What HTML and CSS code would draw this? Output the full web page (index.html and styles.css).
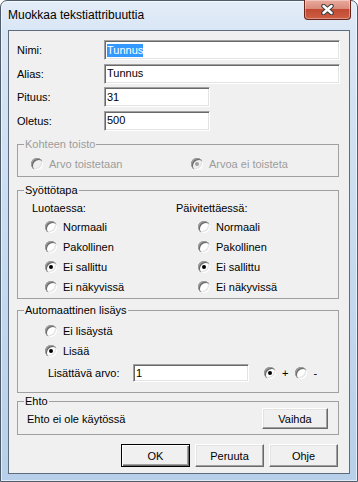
FILE: index.html
```html
<!DOCTYPE html>
<html lang="fi">
  <head>
    <meta charset="UTF-8" />
    <meta name="viewport" content="width=device-width, initial-scale=1.0" />
    <title>Muokkaa tekstiattribuuttia</title>
    <link rel="stylesheet" href="styles.css">
  </head>
  <body>
    <div class="window">
      <div class="titlebar">
        <span class="title">Muokkaa tekstiattribuuttia</span>
        <button class="close" title="Sulje">
          <svg width="13" height="11" viewBox="0 0 13 11">
            <path d="M2.5 2 L10.5 9 M10.5 2 L2.5 9" stroke="#3c3c3c" stroke-width="4.5" stroke-linecap="round" />
            <path d="M2.5 2 L10.5 9 M10.5 2 L2.5 9" stroke="#fff" stroke-width="2.5" stroke-linecap="round" />
          </svg>
        </button>
      </div>

      <div class="client">
        <div class="props">
          <span>Nimi:</span>
          <div class="field wide"><span class="selected">Tunnus</span></div>
          <span>Alias:</span>
          <div class="field wide">Tunnus</div>
          <span>Pituus:</span>
          <div class="field short">31</div>
          <span>Oletus:</span>
          <div class="field short">500</div>
        </div>

        <fieldset class="group repeat">
          <legend class="muted">Kohteen toisto</legend>
          <div class="repeat-row">
            <label class="radio disabled"><span class="dot"></span>Arvo toistetaan</label>
            <label class="radio disabled"><span class="dot checked"></span>Arvoa ei toisteta</label>
          </div>
        </fieldset>

        <fieldset class="group input-mode">
          <legend>Syöttötapa</legend>
          <div class="columns">
            <div class="column">
              <div class="heading">Luotaessa:</div>
              <div class="options left">
                <label class="radio"><span class="dot"></span>Normaali</label>
                <label class="radio"><span class="dot"></span>Pakollinen</label>
                <label class="radio"><span class="dot checked"></span>Ei sallittu</label>
                <label class="radio"><span class="dot"></span>Ei näkyvissä</label>
              </div>
            </div>
            <div class="column">
              <div class="heading">Päivitettäessä:</div>
              <div class="options right">
                <label class="radio"><span class="dot"></span>Normaali</label>
                <label class="radio"><span class="dot"></span>Pakollinen</label>
                <label class="radio"><span class="dot checked"></span>Ei sallittu</label>
                <label class="radio"><span class="dot"></span>Ei näkyvissä</label>
              </div>
            </div>
          </div>
        </fieldset>

        <fieldset class="group auto">
          <legend>Automaattinen lisäys</legend>
          <div class="options left">
            <label class="radio"><span class="dot"></span>Ei lisäystä</label>
            <label class="radio"><span class="dot checked"></span>Lisää</label>
          </div>
          <div class="increment">
            <span class="increment-label">Lisättävä arvo:</span>
            <div class="field increment-field">1</div>
            <label class="radio sign"><span class="dot checked"></span>+</label>
            <label class="radio sign"><span class="dot"></span>-</label>
          </div>
        </fieldset>

        <fieldset class="group condition">
          <legend>Ehto</legend>
          <div class="condition-row">
            <span>Ehto ei ole käytössä</span>
            <button class="btn change">Vaihda</button>
          </div>
        </fieldset>

        <div class="actions">
          <button class="btn default">OK</button>
          <button class="btn">Peruuta</button>
          <button class="btn">Ohje</button>
        </div>
      </div>
    </div>
  </body>
</html>
```

FILE: styles.css
```css
* {
  box-sizing: border-box;
}

body {
  margin: 0;
  background: #fff;
  font-family: "Liberation Sans", Arial, sans-serif;
  font-size: 11px;
  color: #000;
}

/* window frame */
.window {
  width: 358px;
  height: 482px;
  display: flex;
  flex-direction: column;
  padding: 0 7px 7px;
  border: 1px solid #4e5c6c;
  border-radius: 7px 7px 0 0;
  background: linear-gradient(to bottom, #e4edf8 0, #d9e6f5 30px, #c6daef 55%, #b8cfe9 100%);
  box-shadow: inset 0 0 0 1px rgba(255, 255, 255, 0.6);
}

.titlebar {
  height: 29px;
  display: flex;
  justify-content: space-between;
  align-items: flex-start;
  margin-right: -1px;
}

.title {
  margin-top: 7px;
  line-height: 15px;
  font-size: 12px;
}

.close {
  width: 47px;
  height: 20px;
  margin-top: -1px;
  padding: 0;
  display: flex;
  align-items: center;
  justify-content: center;
  border: 1px solid #6b231a;
  border-top: none;
  border-radius: 0 0 4px 4px;
  background: linear-gradient(to bottom, #e9aa9c 0, #d98c7c 45%, #c24a33 50%, #cd5f44 100%);
  box-shadow: inset 0 0 0 1px rgba(255, 255, 255, 0.35);
}

.client {
  flex: 1;
  display: flex;
  flex-direction: column;
  padding: 9px 10px 0 8px;
  background: #f0f0f0;
  border: 1px solid #5d6c7e;
}

/* name fields */
.props {
  display: grid;
  grid-template-columns: 87px 1fr;
  grid-auto-rows: 20px;
  row-gap: 3.5px;
  align-items: center;
}

.field {
  height: 20px;
  display: flex;
  align-items: center;
  padding: 0 2px;
  background: #fff;
  border-style: solid;
  border-width: 1px;
  border-color: #a0a0a0 #fff #fff #a0a0a0;
  box-shadow: inset 1px 1px 0 #696969, inset -1px -1px 0 #e3e3e3;
  line-height: 13px;
}

.field.wide {
  margin-right: -1px;
}

.field.short {
  width: 106px;
}

.selected {
  background: #3399ff;
  color: #fff;
}

/* group boxes */
.group {
  margin: 0;
  padding: 0 0 0 6px;
  min-width: 0;
  border: 1px solid #a0a0a0;
}

.group legend {
  padding: 0 1px;
  line-height: 13px;
}

.muted {
  color: #9c9c9c;
}

.repeat {
  margin-top: 7.5px;
  padding-top: 3px;
  padding-bottom: 2px;
}

.repeat-row {
  display: grid;
  grid-template-columns: 160px 1fr;
  padding-left: 7px;
}

.input-mode {
  margin-top: 7px;
  padding-top: 2px;
  padding-bottom: 1px;
}

.columns {
  display: grid;
  grid-template-columns: 144px 1fr;
  padding-left: 8px;
}

.heading {
  height: 18px;
  display: flex;
  align-items: center;
}

.options.left {
  margin-left: 13px;
}

.options.right {
  margin-left: 22px;
}

.auto {
  margin-top: 5px;
  padding-top: 4px;
  padding-bottom: 9px;
}

.auto .options.left {
  margin-left: 21px;
}

.increment {
  height: 20px;
  margin-top: 2px;
  padding-left: 24px;
  display: flex;
  align-items: center;
}

.increment-label {
  width: 85px;
}

.increment-field {
  width: 116px;
  height: 18px;
  margin-right: 15px;
}

.radio.sign {
  margin-right: 7px;
}

.condition {
  margin-top: 2px;
  padding-bottom: 5px;
}

.condition-row {
  height: 21px;
  display: flex;
  align-items: center;
  justify-content: space-between;
  padding: 0 10px 0 3px;
}

/* radio buttons */
.radio {
  height: 20px;
  display: flex;
  align-items: center;
  gap: 6px;
}

.dot {
  position: relative;
  width: 12px;
  height: 12px;
  border-radius: 50%;
  background: #fff;
  box-shadow: inset 1px 1px 0 #a0a0a0, inset 2px 2px 0 #696969,
    inset -1px -1px 0 #fff, inset -2px -2px 0 #e3e3e3;
}

.dot.checked::after {
  content: "";
  position: absolute;
  left: 4px;
  top: 4px;
  width: 4px;
  height: 4px;
  border-radius: 50%;
  background: #000;
}

.radio.disabled {
  color: #9c9c9c;
}

.radio.disabled .dot {
  background: #f0f0f0;
}

.radio.disabled .dot.checked::after {
  background: #a0a0a0;
}

/* push buttons */
.btn {
  height: 23px;
  width: 69px;
  padding: 0;
  font: inherit;
  color: #000;
  background: #f0f0f0;
  border: 1px solid;
  border-color: #fff #696969 #696969 #fff;
  box-shadow: inset -1px -1px 0 #a0a0a0, inset 1px 1px 0 #e3e3e3;
}

.btn.change {
  width: 66px;
  height: 21px;
}

.btn.default {
  border-color: #000;
  box-shadow: inset 1px 1px 0 #fff, inset -1px -1px 0 #696969, inset -2px -2px 0 #a0a0a0;
}

.actions {
  display: flex;
  justify-content: flex-end;
  gap: 5px;
  margin-top: 9px;
  padding-right: 1px;
}
```
